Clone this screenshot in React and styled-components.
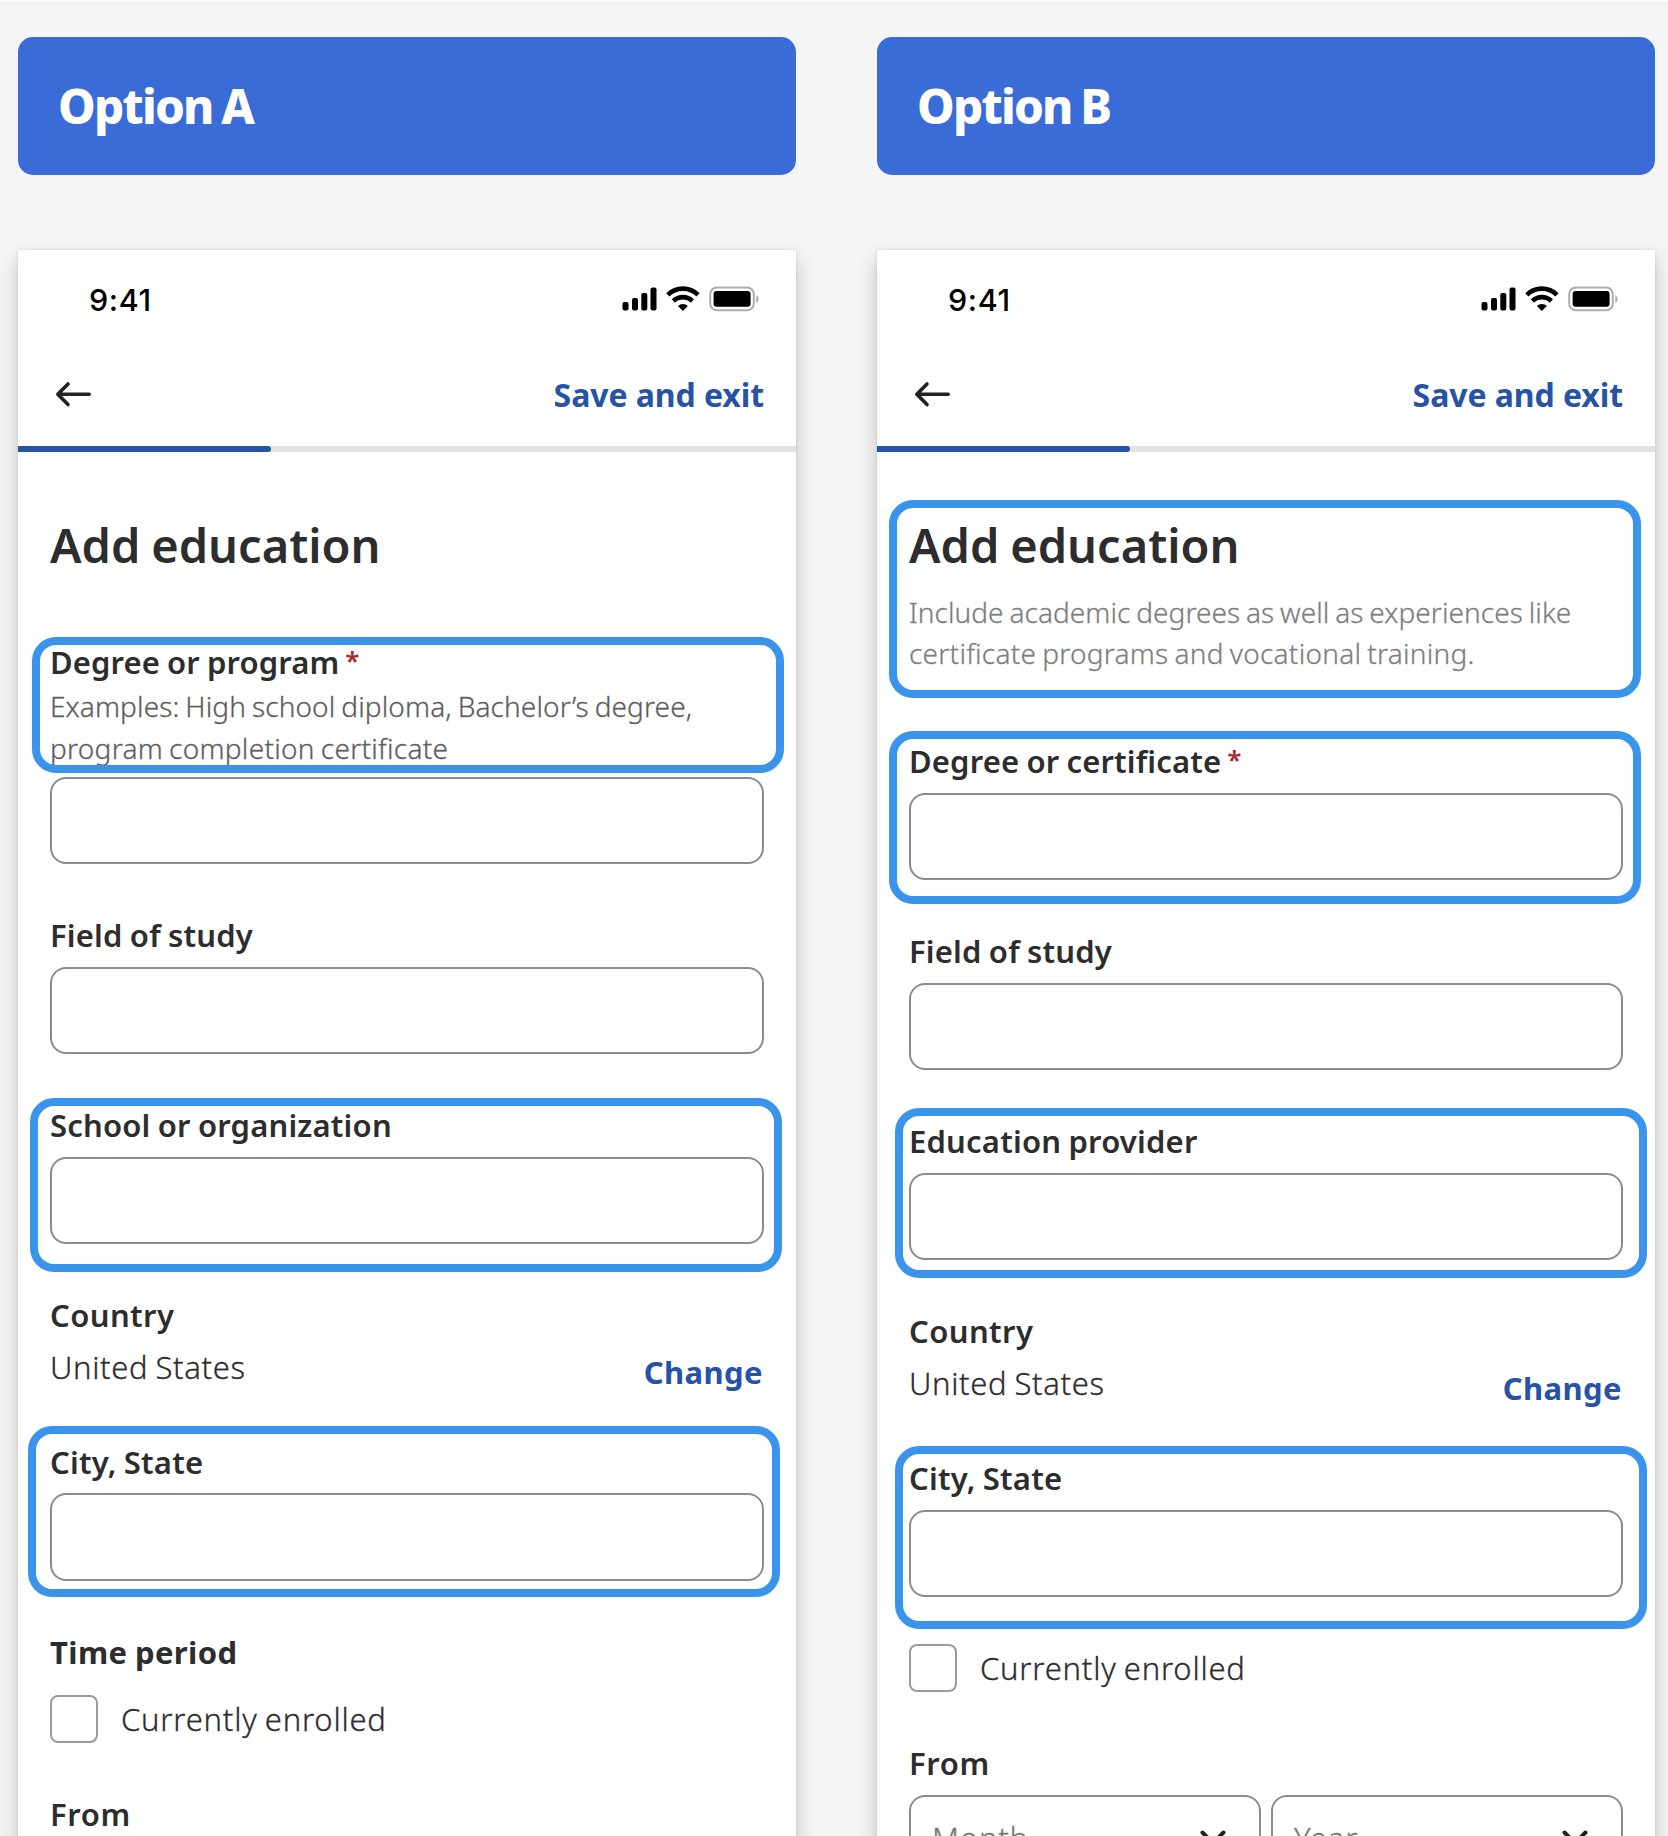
import React from "react";
import styled, { createGlobalStyle } from "styled-components";

const GlobalStyle = createGlobalStyle`
  *, *::before, *::after { box-sizing: border-box; }
  body {
    margin: 0;
    background: #f5f5f5;
    font-family: "Noto Sans", "Open Sans", sans-serif;
    color: #2d2d2d;
    font-kerning: normal;
  }
`;

const Board = styled.main`
  display: grid;
  grid-template-columns: 778px 778px;
  column-gap: 81px;
  height: 1836px;
  padding: 35.5px 13px 0 18px;
  border-top: 1px solid #fbfbfb;
  overflow: hidden;
`;

const Option = styled.section`
  display: flex;
  flex-direction: column;
  gap: 75px;
`;

const Banner = styled.header`
  display: flex;
  align-items: center;
  height: 138.5px;
  padding: 0 40px;
  border-radius: 15px;
  background: #396cd6;
  color: #fff;
  font-size: 47.5px;
  font-weight: 800;
  letter-spacing: -1.75px;
  word-spacing: -2px;
  line-height: 64px;
`;

const Phone = styled.article`
  display: flex;
  flex-direction: column;
  height: 1700px;
  background: #fff;
  box-shadow: 0 10px 20px rgba(0, 0, 0, 0.2), 0 0 3px rgba(0, 0, 0, 0.12);
`;

const StatusBar = styled.div`
  display: flex;
  align-items: center;
  justify-content: space-between;
  height: 99px;
  padding: 0 36px 1px 71px;
`;

const Clock = styled.time`
  color: #000;
  font-family: Inter, sans-serif;
  font-size: 30.5px;
  font-weight: 550;
  letter-spacing: 0.6px;
`;

const StatusGlyphs = styled.svg`
  display: block;
  width: 138px;
  height: 26px;
`;

const NavBar = styled.nav`
  display: flex;
  align-items: center;
  justify-content: space-between;
  height: 97px;
  padding: 0 32px 7px 36px;
`;

const BackArrow = styled.svg`
  display: block;
  width: 38px;
  height: 28px;
`;

const TextLink = styled.a`
  color: #2753a6;
  font-size: ${(p) => p.$size || 31}px;
  font-weight: 700;
  line-height: 42px;
  letter-spacing: ${(p) => p.$track || 0}px;
`;

const SaveLink = styled(TextLink)`
  padding-top: 2px;
`;

const Track = styled.div`
  height: 6px;
  background: #e2e2e1;
`;

const Progress = styled.div`
  width: 253px;
  height: 6px;
  border-radius: 0 3px 3px 0;
  background: #2753a6;
`;

const Form = styled.form`
  display: flex;
  flex-direction: column;
  padding: 63px 32px 0;
`;

const Group = styled.div`
  position: relative;
  display: flex;
  flex-direction: column;
  margin-top: ${(p) => p.$above || 0}px;
`;

const Highlight = styled.div`
  position: absolute;
  z-index: 1;
  top: ${(p) => p.$top}px;
  bottom: ${(p) => p.$bottom}px;
  left: ${(p) => p.$left}px;
  width: 752px;
  border: 8px solid #3b94ec;
  border-radius: 24px;
  pointer-events: none;
`;

const Title = styled.h1`
  margin: 0;
  font-size: 47px;
  font-weight: 600;
  line-height: 60px;
  word-spacing: -1.5px;
`;

const Label = styled.label`
  display: flex;
  height: 42px;
  font-size: 31px;
  font-weight: ${(p) => p.$weight || 600};
  line-height: 42px;
  letter-spacing: ${(p) => p.$track || 0.17}px;
  word-spacing: -1px;
  white-space: nowrap;
`;

const Required = styled.span`
  margin: -2px 0 0 6px;
  color: #a82a2a;
  font-size: 26px;
`;

const Help = styled.p`
  margin: ${(p) => p.$above}px 0 0;
  color: ${(p) => p.$color};
  font-size: 28px;
  font-weight: 300;
  line-height: 41.5px;
  -webkit-text-stroke: 0.3px currentColor;
`;

const Line = styled.span`
  display: block;
  letter-spacing: ${(p) => p.$track}px;
  word-spacing: ${(p) => p.$words || -1.5}px;
  white-space: nowrap;
`;

const Input = styled.input`
  width: 100%;
  height: 87.3px;
  margin: ${(p) => p.$above || 10.7}px 0 0;
  padding: 0 24px;
  border: 2px solid #8c8c8c;
  border-radius: 16px;
  background: #fff;
`;

const CountryRow = styled.div`
  display: flex;
  align-items: flex-start;
  justify-content: space-between;
  height: 42px;
  margin-top: 10px;
`;

const Value = styled.span`
  font-size: 31px;
  font-weight: 300;
  line-height: 42px;
  letter-spacing: ${(p) => p.$track}px;
  word-spacing: -1.5px;
  -webkit-text-stroke: 0.3px currentColor;
`;

const ChangeSlot = styled.span`
  padding: 5px 1px 0 0;
`;

const CheckRow = styled.label`
  display: flex;
  align-items: flex-start;
  gap: 23px;
  height: 48px;
  margin-top: ${(p) => p.$above}px;
`;

const CheckBox = styled.span`
  width: 48px;
  height: 48px;
  border: 2px solid #9a9a9a;
  border-radius: 8px;
`;

const CheckText = styled(Value)`
  padding-top: 2.5px;
`;

const SelectRow = styled.div`
  display: grid;
  grid-template-columns: 1fr 1fr;
  gap: 10px;
  margin-top: 11px;
`;

const Select = styled.div`
  display: flex;
  align-items: center;
  justify-content: space-between;
  height: 87px;
  padding: 0 31px 0 21px;
  border: 2px solid #8c8c8c;
  border-radius: 16px;
`;

const Placeholder = styled.span`
  color: #767676;
  font-size: 31px;
  font-weight: 300;
  line-height: 42px;
  letter-spacing: 0.8px;
  -webkit-text-stroke: 0.3px currentColor;
`;

const Chevron = styled.svg`
  display: block;
  width: 30px;
  height: 20px;
`;

function StatusIcons() {
  return (
    <StatusGlyphs viewBox="0 0 138 26">
      <rect x="0.5" y="16" width="6" height="8.5" rx="2" />
      <rect x="10" y="12" width="6" height="12.5" rx="2" />
      <rect x="19.3" y="7" width="6" height="17.5" rx="2" />
      <rect x="28.5" y="1.5" width="6" height="23" rx="2" />
      <g fill="none" stroke="#000" strokeWidth="4.6">
        <path d="M45.8 8.8A21.5 21.5 0 0 1 76 8.8" />
        <path d="M51.4 15A13.6 13.6 0 0 1 70.4 15" />
      </g>
      <path d="M60.9 25l-5-5.1a7.4 7.4 0 0 1 10 0z" />
      <rect x="88.2" y="1.6" width="43.6" height="22.6" rx="6.5" fill="none" stroke="#adadad" strokeWidth="2" />
      <rect x="91.6" y="5" width="37" height="15.8" rx="3" />
      <path d="M134.2 9.3v7.8c3.2-1.4 3.2-6.4 0-7.8z" fill="#adadad" />
    </StatusGlyphs>
  );
}

function Header() {
  return (
    <>
      <StatusBar>
        <Clock>9:41</Clock>
        <StatusIcons />
      </StatusBar>
      <NavBar>
        <BackArrow viewBox="0 0 38 28" fill="none" stroke="#222" strokeWidth="3.6" strokeLinecap="round" strokeLinejoin="round">
          <path d="M35.2 14.3H4M14 4L3.8 14.3 14 24.6" />
        </BackArrow>
        <SaveLink $size={32} $track={-0.08}>Save and exit</SaveLink>
      </NavBar>
      <Track>
        <Progress />
      </Track>
    </>
  );
}

function Field({ label, track, required, above = 50, mark }) {
  return (
    <Group $above={above}>
      <Label $track={track}>
        {label}
        {required && <Required>*</Required>}
      </Label>
      <Input type="text" />
      {mark && <Highlight $top={mark[0]} $bottom={mark[1]} $left={mark[2]} />}
    </Group>
  );
}

function Country() {
  return (
    <Group $above={50}>
      <Label $track={0.4}>Country</Label>
      <CountryRow>
        <Value $track={0.66}>United States</Value>
        <ChangeSlot>
          <TextLink $track={0.4}>Change</TextLink>
        </ChangeSlot>
      </CountryRow>
    </Group>
  );
}

function Enrolled({ above }) {
  return (
    <CheckRow $above={above}>
      <CheckBox />
      <CheckText $track={0.78}>Currently enrolled</CheckText>
    </CheckRow>
  );
}

function Dropdown({ children }) {
  return (
    <Select>
      <Placeholder>{children}</Placeholder>
      <Chevron viewBox="0 0 30 20" fill="none" stroke="#222" strokeWidth="4" strokeLinecap="round" strokeLinejoin="round">
        <path d="M4.5 4.5L15 15 25.5 4.5" />
      </Chevron>
    </Select>
  );
}

function OptionA() {
  return (
    <Option>
      <Banner>Option A</Banner>
      <Phone>
        <Header />
        <Form>
          <Title>Add education</Title>
          <Group $above={65.7}>
            <Label $track={0.1}>
              Degree or program
              <Required>*</Required>
            </Label>
            <Help $above={3.7} $color="#5e5e5e">
              <Line $track={0.12}>Examples: High school diploma, Bachelor’s degree,</Line>
              <Line $track={0.28}>program completion certificate</Line>
            </Help>
            <Highlight $top={-4} $bottom={-3.6} $left={-18} />
          </Group>
          <Input type="text" $above={7.3} />
          <Field label="Field of study" />
          <Field label="School or organization" track={0.18} mark={[-6, -28.2, -20]} />
          <Country />
          <Field label="City, State" track={0.2} above={52.6} mark={[-14.5, -16, -22]} />
          <Group $above={50}>
            <Label $weight={700} $track={0.4}>Time period</Label>
          </Group>
          <Enrolled above={22.7} />
          <Group $above={49.3}>
            <Label $track={0.6}>From</Label>
          </Group>
        </Form>
      </Phone>
    </Option>
  );
}

function OptionB() {
  return (
    <Option>
      <Banner>Option B</Banner>
      <Phone>
        <Header />
        <Form>
          <Group>
            <Title>Add education</Title>
            <Help $above={16.5} $color="#7e7e7e">
              <Line $track={0.06}>Include academic degrees as well as experiences like</Line>
              <Line $track={0.26}>certificate programs and vocational training.</Line>
            </Help>
            <Highlight $top={-15.5} $bottom={-23.5} $left={-20} />
          </Group>
          <Field label="Degree or certificate" track={0.14} required above={65.8} mark={[-9, -24, -20]} />
          <Field label="Field of study" />
          <Field label="Education provider" track={0.2} mark={[-12, -18.2, -14]} />
          <Country />
          <Field label="City, State" track={0.2} above={52.6} mark={[-11, -32, -14]} />
          <Enrolled above={47.4} />
          <Group $above={49.3}>
            <Label $track={0.6}>From</Label>
            <SelectRow>
              <Dropdown>Month</Dropdown>
              <Dropdown>Year</Dropdown>
            </SelectRow>
          </Group>
        </Form>
      </Phone>
    </Option>
  );
}

export default function App() {
  return (
    <>
      <GlobalStyle />
      <Board>
        <OptionA />
        <OptionB />
      </Board>
    </>
  );
}
